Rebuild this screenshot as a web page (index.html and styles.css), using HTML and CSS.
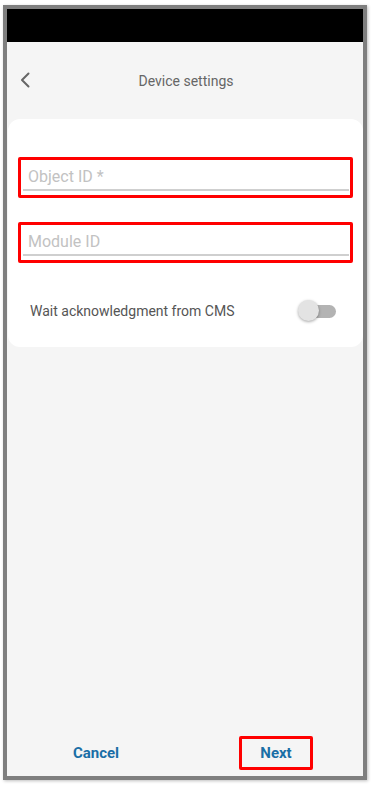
FILE: index.html
```html
<!DOCTYPE html>
<html lang="en">
<head>
    <meta charset="UTF-8">
    <meta name="viewport" content="width=device-width, initial-scale=1.0">
    <title>Device settings</title>
    <link rel="stylesheet" href="styles.css">
</head>
<body>
    <div class="frame">
        <div class="status-bar"></div>

        <div class="app-bar">
            <button class="back-btn" aria-label="Back">
                <svg width="10" height="16" viewBox="0 0 10 16">
                    <path d="M8.5 1.5 L2 8 L8.5 14.5" fill="none" stroke="#666" stroke-width="2" stroke-linecap="round" stroke-linejoin="round"/>
                </svg>
            </button>
            <div class="title">Device settings</div>
        </div>

        <div class="card">
            <div class="field marked">
                <input type="text" placeholder="Object ID *">
            </div>
            <div class="field marked">
                <input type="text" placeholder="Module ID">
            </div>
            <div class="toggle-row">
                <span>Wait acknowledgment from CMS</span>
                <div class="switch">
                    <div class="track"></div>
                    <div class="thumb"></div>
                </div>
            </div>
        </div>

        <div class="spacer"></div>

        <div class="footer">
            <div class="cell"><button class="btn">Cancel</button></div>
            <div class="cell"><button class="btn marked">Next</button></div>
        </div>
    </div>
</body>
</html>
```

FILE: styles.css
```css
* {
    margin: 0;
    padding: 0;
    box-sizing: border-box;
}

body {
    font-family: Roboto, "Liberation Sans", sans-serif;
    background: white;
    width: 371px;
    height: 785px;
    overflow: hidden;
}

.frame {
    margin: 5px 0 0 3px;
    width: 364px;
    height: 775px;
    border: 4px solid #7f7f7f;
    background: #f5f5f5;
    box-shadow: 1px 1px 3px rgba(0,0,0,0.25);
    display: flex;
    flex-direction: column;
}

.status-bar {
    height: 33px;
    background: black;
}

.app-bar {
    height: 77px;
    display: flex;
    align-items: center;
    position: relative;
}

.back-btn {
    position: absolute;
    left: 13px;
    top: 30px;
    background: none;
    border: none;
    display: flex;
}

.title {
    flex: 1;
    text-align: center;
    font-size: 14px;
    color: #666;
    padding-left: 2px;
    padding-top: 1px;
}

.card {
    margin-left: 1px;
    background: white;
    border-radius: 12px;
    height: 228px;
    padding: 38px 10px 0 10px;
    display: flex;
    flex-direction: column;
    gap: 24px;
}

.marked {
    border: 3px solid #ff0000;
    border-radius: 2px;
}

.field {
    height: 41px;
    padding: 0 1px 4px 2px;
    display: flex;
}

.field input {
    flex: 1;
    border: none;
    border-bottom: 2px solid #cfcfcf;
    font-family: inherit;
    font-size: 16px;
    padding: 4px 0 0 5px;
    background: transparent;
    outline: none;
}

.field input::placeholder {
    color: #c2c2c2;
}

.toggle-row {
    display: flex;
    align-items: center;
    justify-content: space-between;
    padding: 13px 17px 0 12px;
    font-size: 14px;
    color: #555;
}

.switch {
    position: relative;
    width: 38px;
    height: 22px;
}

.track {
    position: absolute;
    left: 4px;
    top: 5px;
    width: 34px;
    height: 13px;
    border-radius: 7px;
    background: #b3b3b3;
}

.thumb {
    position: absolute;
    left: 0;
    top: 0;
    width: 21px;
    height: 21px;
    border-radius: 50%;
    background: #e3e3e3;
    box-shadow: 0 1px 3px rgba(0,0,0,0.35);
}

.spacer {
    flex: 1;
}

.footer {
    display: flex;
    padding-bottom: 6px;
}

.cell {
    flex: 1;
    display: flex;
    justify-content: center;
}

.btn {
    height: 34px;
    width: 74px;
    background: none;
    border: 3px solid transparent;
    font-family: inherit;
    font-size: 15px;
    font-weight: 700;
    color: #1a6ea6;
    cursor: pointer;
}

.btn.marked {
    border-color: #ff0000;
    margin-left: 4px;
}
```
